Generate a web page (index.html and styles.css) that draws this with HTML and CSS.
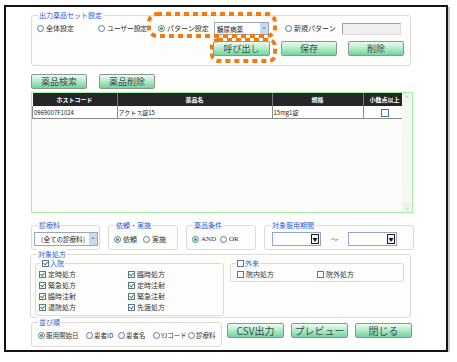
FILE: index.html
```html
<!DOCTYPE html>
<html lang="ja">
<head>
  <meta charset="UTF-8">
  <meta name="viewport" content="width=device-width, initial-scale=1.0">
  <link rel="stylesheet" href="styles.css">
  <title>出力薬品セット設定</title>
</head>
<body>

<div class="window">

  <div class="group top-group">
    <span class="legend">出力薬品セット設定</span>
    <div class="pattern-row">
      <label class="opt w-all"><span class="radio"></span>全体設定</label>
      <label class="opt w-user"><span class="radio"></span>ユーザー設定</label>
      <label class="opt w-pat"><span class="radio on"></span>パターン設定</label>
      <div class="select pattern-select"><span>糖尿病薬</span><span class="drop">&#8964;</span></div>
      <label class="opt w-new"><span class="radio"></span>新規パターン</label>
      <div class="new-input"></div>
    </div>
    <div class="action-row">
      <button class="btn btn-sm">呼び出し</button>
      <button class="btn btn-sm">保存</button>
      <button class="btn btn-sm">削除</button>
    </div>
  </div>

  <div class="drug-buttons">
    <button class="btn btn-sm">薬品検索</button>
    <button class="btn btn-sm">薬品削除</button>
  </div>

  <div class="grid-box">
    <div class="grid-scroll">
      <table class="grid">
        <tr>
          <th class="c-code">ホストコード</th>
          <th class="c-name">薬品名</th>
          <th class="c-spec">規格</th>
          <th class="c-dec">小数点以上</th>
        </tr>
        <tr>
          <td>0969007F1024</td>
          <td>アクトス錠15</td>
          <td>15mg1錠</td>
          <td class="center"><span class="check"></span></td>
        </tr>
      </table>
    </div>
    <div class="scrollbar">
      <span class="sb-btn">&#8963;</span>
      <span class="sb-btn">&#8964;</span>
    </div>
  </div>

  <div class="cond-row">
    <div class="group g-dept">
      <span class="legend">診療料</span>
      <div class="select dept-select"><span>（全ての診療料）</span><span class="drop">&#8964;</span></div>
    </div>
    <div class="group g-req">
      <span class="legend">依頼・実施</span>
      <div class="radio-line">
        <label class="opt w-30"><span class="radio on"></span>依頼</label>
        <label class="opt"><span class="radio"></span>実施</label>
      </div>
    </div>
    <div class="group g-cond">
      <span class="legend">薬品条件</span>
      <div class="radio-line">
        <label class="opt w-28 latin"><span class="radio on"></span>AND</label>
        <label class="opt latin"><span class="radio"></span>OR</label>
      </div>
    </div>
    <div class="group g-period">
      <span class="legend">対象服用期間</span>
      <div class="period-line">
        <div class="combo"><span class="combo-btn">&#9660;</span></div>
        <span class="tilde">～</span>
        <div class="combo"><span class="combo-btn">&#9660;</span></div>
      </div>
    </div>
  </div>

  <div class="group g-rx">
    <span class="legend">対象処方</span>
    <div class="group g-in">
      <span class="legend"><span class="check on"></span>入院</span>
      <div class="check-grid in-grid">
        <label class="opt"><span class="check on"></span>定時処方</label>
        <label class="opt"><span class="check on"></span>臨時処方</label>
        <label class="opt"><span class="check on"></span>緊急処方</label>
        <label class="opt"><span class="check on"></span>定時注射</label>
        <label class="opt"><span class="check on"></span>臨時注射</label>
        <label class="opt"><span class="check on"></span>緊急注射</label>
        <label class="opt"><span class="check on"></span>退院処方</label>
        <label class="opt"><span class="check on"></span>先渡処方</label>
      </div>
    </div>
    <div class="group g-out">
      <span class="legend"><span class="check"></span>外来</span>
      <div class="check-grid out-grid">
        <label class="opt"><span class="check"></span>院内処方</label>
        <label class="opt"><span class="check"></span>院外処方</label>
      </div>
    </div>
  </div>

  <div class="bottom-row">
    <div class="group g-sort">
      <span class="legend">並び順</span>
      <div class="radio-line">
        <label class="opt w-48"><span class="radio on"></span>服用開始日</label>
        <label class="opt w-32"><span class="radio"></span>患者ID</label>
        <label class="opt w-35"><span class="radio"></span>患者名</label>
        <label class="opt w-35"><span class="radio"></span>YJコード</label>
        <label class="opt"><span class="radio"></span>診療料</label>
      </div>
    </div>
    <button class="btn btn-lg">CSV出力</button>
    <button class="btn btn-lg">プレビュー</button>
    <button class="btn btn-lg">閉じる</button>
  </div>

</div>

<svg class="marks" width="457" height="362" viewBox="0 0 457 362">
  <rect x="149" y="14" width="126" height="22" rx="8" />
  <rect x="212" y="40" width="63" height="21" rx="6" />
</svg>

</body>
</html>
```

FILE: styles.css
```css
body {
  margin: 0;
  background-color: #fff;
  font-family: "Noto Sans CJK JP", "Noto Sans", sans-serif;
  color: #333;
}

.window {
  position: relative;
  box-sizing: border-box;
  width: 444px;
  height: 347px;
  margin: 5px 0 0 4px;
  padding: 8px 0 0 25px;
  border: 2px solid #141414;
  box-shadow: 2px 2px 0 #c8c8c8;
  background-color: #fff;
}

/* group boxes */
.group {
  position: relative;
  box-sizing: border-box;
  border: 1px solid #dcdcd2;
  border-radius: 3px;
  background-color: #fdfdfb;
}

.legend {
  position: absolute;
  top: -6px;
  left: 6px;
  display: flex;
  align-items: center;
  gap: 1px;
  padding: 0 1px;
  font-size: 7px;
  line-height: 10px;
  color: #2c5ad8;
  background-color: #fdfdfb;
}

.opt {
  display: flex;
  align-items: center;
  gap: 2px;
  font-size: 7px;
  line-height: 11px;
  color: #333;
  white-space: nowrap;
}

.latin {
  font-family: "Liberation Serif", serif;
  font-size: 7px;
}

.radio {
  position: relative;
  box-sizing: border-box;
  width: 7px;
  height: 7px;
  border: 1px solid #5a78a8;
  border-radius: 50%;
  background-color: #fff;
  flex: none;
}

.radio.on::after {
  content: "";
  position: absolute;
  left: 1px;
  top: 1px;
  width: 3px;
  height: 3px;
  border-radius: 50%;
  background-color: #38a838;
}

.check {
  position: relative;
  box-sizing: border-box;
  width: 7px;
  height: 7px;
  border: 1px solid #5d7394;
  background-color: #fff;
  flex: none;
}

.check.on::after {
  content: "";
  position: absolute;
  left: 1px;
  top: 0;
  width: 2px;
  height: 3px;
  border-right: 1px solid #2d9a2d;
  border-bottom: 1px solid #2d9a2d;
  transform: rotate(40deg);
}

/* buttons */
.btn {
  box-sizing: border-box;
  padding: 0;
  border: 1px solid #8c9590;
  border-radius: 2px;
  background: linear-gradient(#eefaf2, #b9ecca 45%, #6fd49a);
  font-family: "Noto Sans CJK JP", sans-serif;
  color: #3b4b58;
  cursor: pointer;
}

.btn-sm {
  width: 56px;
  height: 15px;
  font-size: 9px;
  line-height: 13px;
}

.btn-lg {
  width: 57px;
  height: 15px;
  font-size: 10px;
  line-height: 13px;
}

/* top group */
.top-group {
  width: 380px;
  height: 51px;
  padding: 6px 6px 0 5px;
}

.pattern-row {
  display: flex;
  align-items: center;
  height: 13px;
}

.w-all { width: 61px; }
.w-user { width: 60px; }
.w-pat { width: 56px; }
.w-new { width: 57px; }
.w-28 { width: 28px; }
.w-30 { width: 29px; }
.w-32 { width: 32px; }
.w-35 { width: 35px; }
.w-48 { width: 48px; }

.w-user {
  letter-spacing: -0.3px;
}

.select {
  box-sizing: border-box;
  display: flex;
  align-items: center;
  justify-content: space-between;
  height: 13px;
  border: 1px solid #98a6b8;
  background-color: #fff;
  font-size: 6.5px;
  color: #222;
}

.select span:first-child {
  padding-left: 2px;
}

.drop {
  width: 8px;
  height: 11px;
  background-color: #c9d9f2;
  color: #3a5a90;
  font-size: 7px;
  line-height: 6px;
  text-align: center;
}

.pattern-select {
  width: 55px;
  margin-right: 16px;
}

.new-input {
  box-sizing: border-box;
  width: 59px;
  height: 12px;
  border: 1px solid #a0a0a0;
  border-bottom-color: #dcdcdc;
  border-right-color: #dcdcdc;
  background-color: #efefef;
}

.action-row {
  display: flex;
  justify-content: flex-end;
  gap: 11px;
  margin-top: 6px;
}

.action-row .btn:first-child {
  width: 57px;
}

/* drug list */
.drug-buttons {
  display: flex;
  gap: 12px;
  margin-top: 8px;
}

.grid-box {
  box-sizing: border-box;
  display: flex;
  width: 382px;
  height: 121px;
  margin-top: 3px;
  border: 1px solid #a6f0a6;
  background-color: #fcfdfa;
}

.grid-scroll {
  width: 370px;
}

.grid {
  width: 370px;
  border-collapse: collapse;
  font-size: 6px;
  table-layout: fixed;
}

.grid th {
  height: 13px;
  padding: 0;
  background-color: #262626;
  color: #fff;
  font-weight: bold;
  text-align: center;
  border-right: 1px solid #777;
}

.grid td {
  height: 12px;
  padding: 0 1px;
  background-color: #fff;
  color: #222;
  border: 1px solid #8a8a8a;
  border-top: none;
}

.grid .center {
  text-align: center;
}

.grid .center .check {
  display: inline-block;
  vertical-align: middle;
  width: 8px;
  height: 8px;
  border-color: #4a6fa8;
}

.c-code { width: 84px; }
.c-name { width: 154px; }
.c-spec { width: 90px; }
.c-dec { width: 42px; }

.scrollbar {
  display: flex;
  flex-direction: column;
  justify-content: space-between;
  width: 10px;
  background-color: #f6f8f1;
}

.sb-btn {
  height: 10px;
  font-size: 7px;
  line-height: 10px;
  text-align: center;
  color: #b8c0c8;
  background-color: #f1f4ee;
}

/* conditions */
.cond-row {
  display: flex;
  gap: 8px;
  margin-top: 12px;
}

.cond-row .group {
  height: 25px;
}

.g-dept {
  width: 69px;
  padding: 6px 0 0 2px;
}

.dept-select {
  width: 64px;
  height: 14px;
  font-size: 6.5px;
}

.dept-select .drop {
  height: 12px;
  line-height: 7px;
}

.g-req,
.g-cond {
  width: 70px;
}

.radio-line {
  display: flex;
  align-items: center;
  padding: 8px 0 0 5px;
}

.g-period {
  width: 150px;
  padding: 6px 0 0 7px;
}

.period-line {
  display: flex;
  align-items: center;
}

.combo {
  box-sizing: border-box;
  display: flex;
  justify-content: flex-end;
  align-items: center;
  width: 49px;
  height: 14px;
  border: 1px solid #90a6c4;
  background-color: #fff;
}

.combo-btn {
  box-sizing: border-box;
  width: 8px;
  height: 10px;
  margin-right: 1px;
  border: 1px solid #222;
  background-color: #eef2f8;
  font-size: 5px;
  line-height: 8px;
  text-align: center;
  color: #111;
}

.tilde {
  width: 27px;
  text-align: center;
  font-size: 7px;
  color: #555;
}

/* prescription groups */
.g-rx {
  display: flex;
  align-items: flex-start;
  gap: 6px;
  width: 381px;
  height: 64px;
  margin-top: 4px;
  margin-left: -1px;
  padding: 8px 0 0 4px;
}

.g-in {
  width: 189px;
  height: 53px;
  padding: 5px 0 0 3px;
}

.g-out {
  width: 174px;
  height: 19px;
  padding: 5px 0 0 6px;
}

.g-in .legend,
.g-out .legend {
  left: 5px;
}

.check-grid {
  display: grid;
  grid-auto-rows: 11px;
}

.in-grid {
  grid-template-columns: 89px 89px;
}

.out-grid {
  grid-template-columns: 80px 80px;
}

/* bottom */
.bottom-row {
  display: flex;
  align-items: flex-start;
  gap: 7px;
  margin-top: 4px;
}

.g-sort {
  width: 191px;
  height: 25px;
  margin-right: -2px;
}

.g-sort .radio-line {
  padding: 7px 0 0 6px;
}

.g-sort .opt {
  gap: 1px;
  font-size: 6.5px;
}

.bottom-row .btn {
  margin-top: 1px;
}

/* annotation marks */
.marks {
  position: absolute;
  top: 0;
  left: 0;
  pointer-events: none;
}

.marks rect {
  fill: none;
  stroke: #f27a12;
  stroke-width: 4;
  stroke-dasharray: 5 4;
}
```
